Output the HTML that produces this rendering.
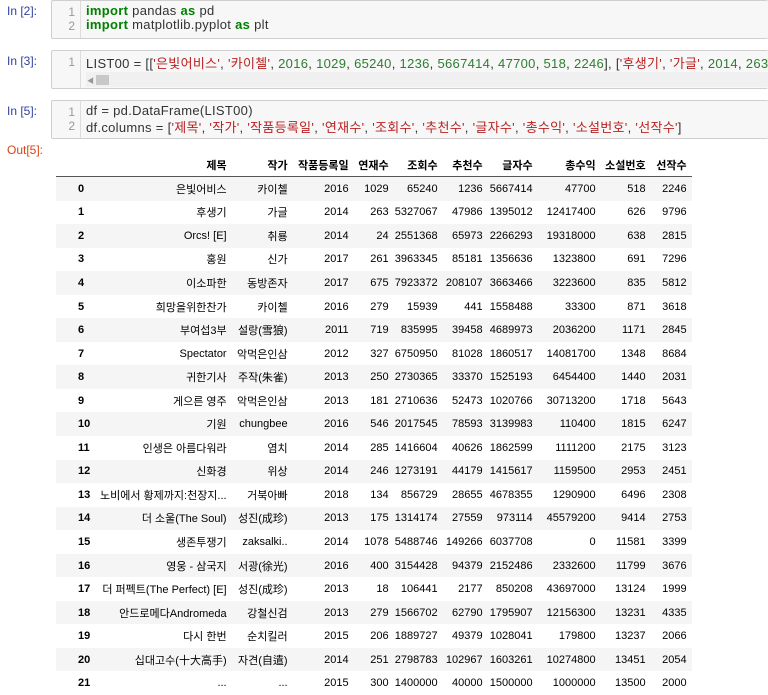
<!DOCTYPE html>
<html><head><meta charset="utf-8"><style>
body{margin:0;width:768px;height:679px;overflow:hidden;background:#fff;font-family:"Liberation Sans","Noto Sans CJK KR",sans-serif;position:relative}
.p{position:absolute;left:7px;font-family:"Liberation Sans","Noto Sans CJK KR",sans-serif;font-size:12px;color:#303f9f}
.o{color:#d84315}
.cell{position:absolute;left:51px;right:0;background:#f7f7f7;border:1px solid #cfcfcf;border-right:none;border-radius:2px;overflow:hidden}
.g{position:absolute;left:0;top:0;bottom:0;width:28px;border-right:1px solid #ddd;background:#f7f7f7}
.ln{position:absolute;left:0;width:23px;text-align:right;color:#999;font-family:"Liberation Sans",sans-serif;font-size:12px}
.c{position:absolute;left:34px;white-space:pre;font-family:"Liberation Sans","Noto Sans CJK KR",sans-serif;font-size:13px;letter-spacing:0.3px;color:#333}
.k{color:#008000;font-weight:bold}.s{color:#ba2121}.n{color:#2e7d32}
table{position:absolute;left:56px;top:154px;border-collapse:collapse;font-size:11px;color:#000;table-layout:fixed}
td,th{padding:0 5px 0 0;text-align:right;height:23.55px;white-space:nowrap;overflow:hidden}
th{font-weight:bold;height:22px;border-bottom:1.5px solid #555}
tbody tr:nth-child(odd){background:#f5f5f5}
td:first-child{text-align:left;padding-left:22px;font-weight:bold}
</style></head><body>
<div class="p" style="top:4px">In [2]:</div>
<div class="cell" style="top:0;height:37px"><div class="g"></div>
<div class="ln" style="top:4px">1</div><div class="ln" style="top:18px">2</div>
<div class="c" style="top:2px"><span class="k">import</span> pandas <span class="k">as</span> pd</div>
<div class="c" style="top:16px"><span class="k">import</span> matplotlib.pyplot <span class="k">as</span> plt</div></div>

<div class="p" style="top:54px">In [3]:</div>
<div class="cell" style="top:50px;height:37px"><div class="g"></div>
<div class="ln" style="top:4px">1</div>
<div class="c" style="top:2px">LIST00 = [[<span class="s">'은빛어비스'</span>, <span class="s">'카이첼'</span>, <span class="n">2016</span>, <span class="n">1029</span>, <span class="n">65240</span>, <span class="n">1236</span>, <span class="n">5667414</span>, <span class="n">47700</span>, <span class="n">518</span>, <span class="n">2246</span>], [<span class="s">'후생기'</span>, <span class="s">'가글'</span>, <span class="n">2014</span>, <span class="n">263</span></div>
<div style="position:absolute;left:34px;top:21px;width:710px;height:15px;background:#f0f0f0"></div>
<div style="position:absolute;left:35px;top:25px;color:#999;font-size:7px">◀</div>
<div style="position:absolute;left:44px;top:24px;width:13px;height:10px;background:#c8c8c8"></div></div>

<div class="p" style="top:104px">In [5]:</div>
<div class="cell" style="top:100px;height:37px"><div class="g"></div>
<div class="ln" style="top:4px">1</div><div class="ln" style="top:18px">2</div>
<div class="c" style="top:2px">df = pd.DataFrame(LIST00)</div>
<div class="c" style="top:16px">df.columns = [<span class="s">'제목'</span>, <span class="s">'작가'</span>, <span class="s">'작품등록일'</span>, <span class="s">'연재수'</span>, <span class="s">'조회수'</span>, <span class="s">'추천수'</span>, <span class="s">'글자수'</span>, <span class="s">'총수익'</span>, <span class="s">'소설번호'</span>, <span class="s">'선작수'</span>]</div></div>

<div class="p o" style="top:143px">Out[5]:</div>
<table>
<colgroup><col style="width:44px"><col style="width:128px"><col style="width:61px"><col style="width:61px"><col style="width:40px"><col style="width:49px"><col style="width:45px"><col style="width:50px"><col style="width:63px"><col style="width:50px"><col style="width:41px"></colgroup>
<thead><tr><th></th><th>제목</th><th>작가</th><th>작품등록일</th><th>연재수</th><th>조회수</th><th>추천수</th><th>글자수</th><th>총수익</th><th>소설번호</th><th>선작수</th></tr></thead>
<tbody>
<tr><td>0</td><td>은빛어비스</td><td>카이첼</td><td>2016</td><td>1029</td><td>65240</td><td>1236</td><td>5667414</td><td>47700</td><td>518</td><td>2246</td></tr>
<tr><td>1</td><td>후생기</td><td>가글</td><td>2014</td><td>263</td><td>5327067</td><td>47986</td><td>1395012</td><td>12417400</td><td>626</td><td>9796</td></tr>
<tr><td>2</td><td>Orcs! [E]</td><td>취룡</td><td>2014</td><td>24</td><td>2551368</td><td>65973</td><td>2266293</td><td>19318000</td><td>638</td><td>2815</td></tr>
<tr><td>3</td><td>홍원</td><td>신가</td><td>2017</td><td>261</td><td>3963345</td><td>85181</td><td>1356636</td><td>1323800</td><td>691</td><td>7296</td></tr>
<tr><td>4</td><td>이소파한</td><td>동방존자</td><td>2017</td><td>675</td><td>7923372</td><td>208107</td><td>3663466</td><td>3223600</td><td>835</td><td>5812</td></tr>
<tr><td>5</td><td>희망을위한찬가</td><td>카이첼</td><td>2016</td><td>279</td><td>15939</td><td>441</td><td>1558488</td><td>33300</td><td>871</td><td>3618</td></tr>
<tr><td>6</td><td>부여섭3부</td><td>설랑(雪狼)</td><td>2011</td><td>719</td><td>835995</td><td>39458</td><td>4689973</td><td>2036200</td><td>1171</td><td>2845</td></tr>
<tr><td>7</td><td>Spectator</td><td>악먹은인삼</td><td>2012</td><td>327</td><td>6750950</td><td>81028</td><td>1860517</td><td>14081700</td><td>1348</td><td>8684</td></tr>
<tr><td>8</td><td>귀한기사</td><td>주작(朱雀)</td><td>2013</td><td>250</td><td>2730365</td><td>33370</td><td>1525193</td><td>6454400</td><td>1440</td><td>2031</td></tr>
<tr><td>9</td><td>게으른 영주</td><td>악먹은인삼</td><td>2013</td><td>181</td><td>2710636</td><td>52473</td><td>1020766</td><td>30713200</td><td>1718</td><td>5643</td></tr>
<tr><td>10</td><td>기원</td><td>chungbee</td><td>2016</td><td>546</td><td>2017545</td><td>78593</td><td>3139983</td><td>110400</td><td>1815</td><td>6247</td></tr>
<tr><td>11</td><td>인생은 아름다워라</td><td>염치</td><td>2014</td><td>285</td><td>1416604</td><td>40626</td><td>1862599</td><td>1111200</td><td>2175</td><td>3123</td></tr>
<tr><td>12</td><td>신화경</td><td>위상</td><td>2014</td><td>246</td><td>1273191</td><td>44179</td><td>1415617</td><td>1159500</td><td>2953</td><td>2451</td></tr>
<tr><td>13</td><td>노비에서 황제까지:천장지...</td><td>거북아빠</td><td>2018</td><td>134</td><td>856729</td><td>28655</td><td>4678355</td><td>1290900</td><td>6496</td><td>2308</td></tr>
<tr><td>14</td><td>더 소울(The Soul)</td><td>성진(成珍)</td><td>2013</td><td>175</td><td>1314174</td><td>27559</td><td>973114</td><td>45579200</td><td>9414</td><td>2753</td></tr>
<tr><td>15</td><td>생존투쟁기</td><td>zaksalki..</td><td>2014</td><td>1078</td><td>5488746</td><td>149266</td><td>6037708</td><td>0</td><td>11581</td><td>3399</td></tr>
<tr><td>16</td><td>영웅 - 삼국지</td><td>서광(徐光)</td><td>2016</td><td>400</td><td>3154428</td><td>94379</td><td>2152486</td><td>2332600</td><td>11799</td><td>3676</td></tr>
<tr><td>17</td><td>더 퍼펙트(The Perfect) [E]</td><td>성진(成珍)</td><td>2013</td><td>18</td><td>106441</td><td>2177</td><td>850208</td><td>43697000</td><td>13124</td><td>1999</td></tr>
<tr><td>18</td><td>안드로메다Andromeda</td><td>강철신검</td><td>2013</td><td>279</td><td>1566702</td><td>62790</td><td>1795907</td><td>12156300</td><td>13231</td><td>4335</td></tr>
<tr><td>19</td><td>다시 한번</td><td>순치킬러</td><td>2015</td><td>206</td><td>1889727</td><td>49379</td><td>1028041</td><td>179800</td><td>13237</td><td>2066</td></tr>
<tr><td>20</td><td>십대고수(十大高手)</td><td>자견(自遣)</td><td>2014</td><td>251</td><td>2798783</td><td>102967</td><td>1603261</td><td>10274800</td><td>13451</td><td>2054</td></tr>
<tr><td>21</td><td>...</td><td>...</td><td>2015</td><td>300</td><td>1400000</td><td>40000</td><td>1500000</td><td>1000000</td><td>13500</td><td>2000</td></tr>
</tbody></table>
</body></html>
